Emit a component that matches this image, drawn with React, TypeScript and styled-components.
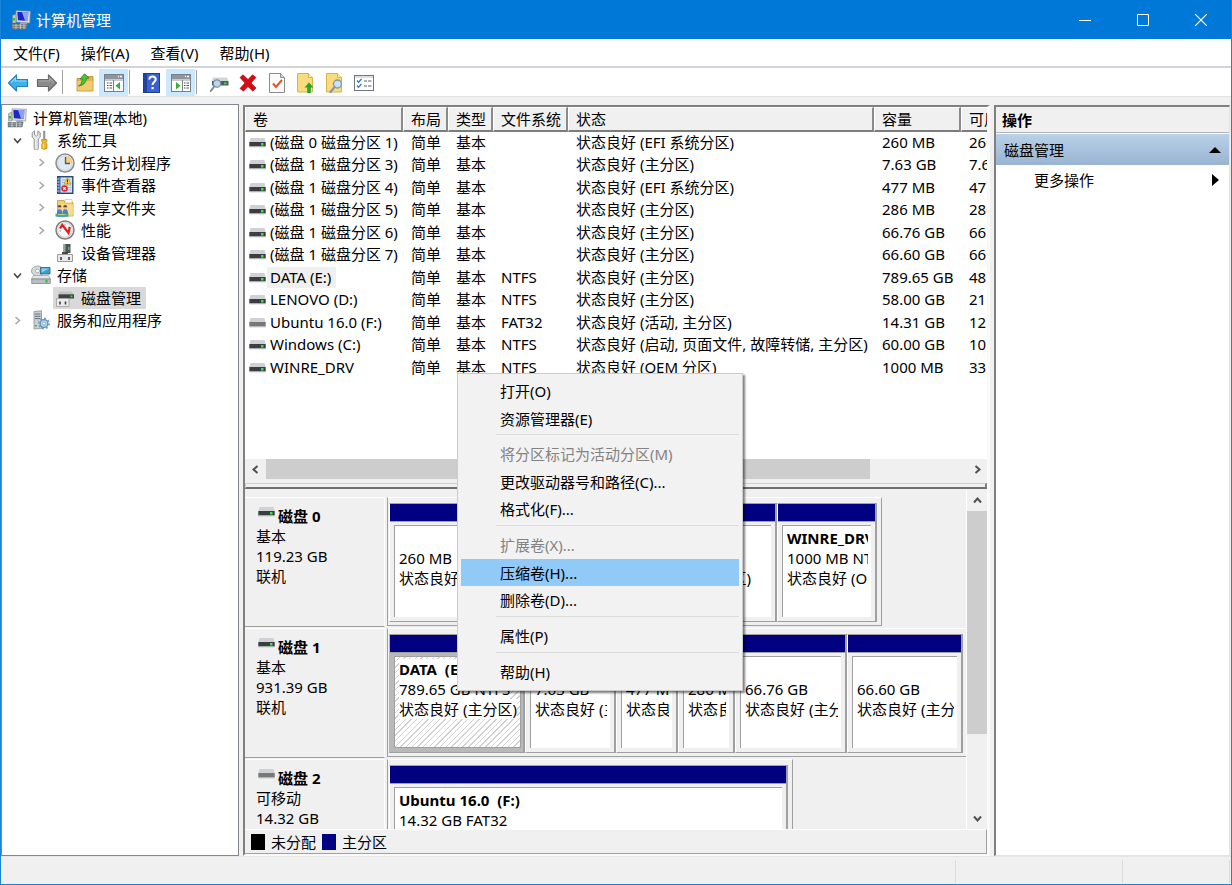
import React from "react";
import styled, { createGlobalStyle, css } from "styled-components";

const GlobalStyle = createGlobalStyle`
  *, *::before, *::after { box-sizing: border-box; }
  body {
    margin: 0;
    font-family: "Noto Sans", "Noto Sans CJK SC", sans-serif;
    font-size: 15px;
    line-height: 20px;
    color: #000;
  }
  button {
    font: inherit;
    color: inherit;
    background: none;
    border: 0;
    padding: 0;
    cursor: default;
  }
  ul { list-style: none; margin: 0; padding: 0; }
  h2, p { margin: 0; font-size: inherit; }
  svg { display: block; flex: none; }
`;

/* ---------- window frame ---------- */

const Window = styled.div`
  position: relative;
  display: flex;
  flex-direction: column;
  height: 100vh;
  min-height: 640px;
  overflow: hidden;
  background: #f0f0f0;
  border: 1px solid #1883d7;
  border-top: 0;
`;

const TitleBar = styled.header`
  display: flex;
  align-items: center;
  flex: none;
  height: 39px;
  padding-left: 10px;
  gap: 5px;
  background: #0078d7;
  color: #fff;
`;

const Title = styled.span`
  flex: 1;
`;

const CaptionButtons = styled.div`
  display: flex;
  padding-right: 1px;
`;

const CaptionButton = styled.button`
  display: grid;
  place-items: center;
  width: 58px;
  height: 39px;
`;

const MenuBar = styled.nav`
  display: flex;
  flex: none;
  align-items: center;
  gap: 21px;
  height: 29px;
  padding: 0 12px;
  background: #fff;
  border-bottom: 2px solid #d0d4d8;
`;

const ToolBar = styled.div`
  display: flex;
  flex: none;
  height: 29px;
  padding: 1px 2px;
  background: #fff;
  border-bottom: 1px solid #e3e3e3;
`;

const ToolButton = styled.button<{ $pressed?: boolean }>`
  display: grid;
  place-items: center;
  width: 29px;
  height: 27px;
  background: ${(p) => (p.$pressed ? "#cce8ff" : "transparent")};
`;

const ToolSeparator = styled.span`
  width: 1px;
  margin: 1px 7px 1px 1px;
  background: #a0a0a0;
`;

const Panes = styled.main`
  display: flex;
  flex: 1;
  min-height: 0;
  padding: 7px 1px 0 0;
`;

const StatusBar = styled.footer`
  display: flex;
  flex: none;
  justify-content: flex-end;
  height: 28px;
  padding: 3px 1px 1px;
  border-top: 1px solid #e6e6e6;
`;

const StatusCell = styled.span<{ $width: number }>`
  width: ${(p) => p.$width}px;
  border-right: 1px solid #dcdcdc;
`;

/* ---------- console tree ---------- */

const TreePane = styled.aside`
  flex: none;
  width: 238px;
  margin-right: 4px;
  padding: 1px 3px;
  background: #fff;
  border: 1px solid #828790;
`;

const TreeRow = styled.li<{ $level: number }>`
  display: flex;
  align-items: center;
  height: 22px;
  padding-left: ${(p) => Math.max(0, p.$level - 1) * 24}px;
  &:nth-child(odd) { height: 23px; }
`;

const Twisty = styled.span`
  display: grid;
  place-items: center;
  width: 24px;
`;

const TreeLabel = styled.button<{ $selected?: boolean }>`
  display: flex;
  align-items: center;
  gap: 6px;
  height: 22px;
  padding: 0 5px 0 2px;
  white-space: nowrap;
  background: ${(p) => (p.$selected ? "#d9d9d9" : "transparent")};
`;

/* ---------- middle pane ---------- */

const CenterPane = styled.section`
  display: flex;
  flex-direction: column;
  flex: 1;
  min-width: 0;
  margin-top: 1px;
  margin-right: 4px;
  border: 2px solid #808080;
  border-right: 3px solid #fafafa;
  border-bottom: 2px solid #fafafa;
`;

const ListView = styled.div`
  flex: 1;
  min-height: 0;
  overflow: hidden;
  background: #fff;
`;

const VolumeTable = styled.table`
  width: 806px;
  table-layout: fixed;
  border-collapse: separate;
  border-spacing: 0;
  text-align: left;
`;

const HeadCell = styled.th<{ $width: number }>`
  width: ${(p) => p.$width}px;
  height: 25px;
  padding: 0 0 0 7px;
  font-weight: 400;
  line-height: 20px;
  background: #f0f0f0;
  border: solid;
  border-width: 1px 2px 2px 1px;
  border-color: #fff #8a8a8a #7c7c7c #fff;
  white-space: nowrap;
  overflow: hidden;
`;

const VolumeRow = styled.tr`
  height: 22px;
  &:nth-child(even) { height: 23px; }
`;

const Cell = styled.td`
  padding: 0 0 0 8px;
  line-height: 21px;
  vertical-align: top;
  white-space: nowrap;
  overflow: hidden;
`;

const NameCell = styled(Cell)`
  padding-left: 4px;
`;

const VolumeName = styled.span`
  display: flex;
  align-items: center;
  gap: 1px;
`;

const NameText = styled.span<{ $selected?: boolean }>`
  padding: 0 5px 0 3px;
  background: ${(p) => (p.$selected ? "#f0f0f0" : "transparent")};
`;

const HScroll = styled.div`
  display: flex;
  flex: none;
  height: 21px;
  background: #f0f0f0;
`;

const ScrollButton = styled.button`
  display: grid;
  place-items: center;
  flex: none;
  width: 20px;
  height: 21px;
`;

const Track = styled.div`
  flex: 1;
`;

const HThumb = styled.div`
  width: 86%;
  height: 20px;
  margin-left: 1px;
  background: #cdcdcd;
`;

const Splitter = styled.div`
  flex: none;
  height: 6px;
  margin: 3px 0 1px;
  border: solid;
  border-width: 1px 2px 2px 1px;
  border-color: #d0d0d0 #808080 #6e6e6e #d0d0d0;
`;

const DiskView = styled.div`
  display: flex;
  flex: none;
  height: 339px;
  overflow: hidden;
`;

const DiskList = styled.div`
  flex: 1;
  min-width: 0;
  padding-top: 7px;
  overflow: hidden;
`;

const DiskRow = styled.article`
  display: flex;
  align-items: flex-start;
  height: 131px;
`;

const DiskLabel = styled.div`
  flex: none;
  width: 140px;
  height: 130px;
  margin-right: 2px;
  padding: 8px 0 0 11px;
  border: solid;
  border-width: 1px 1px 1px 0;
  border-color: #fff #fff #a0a0a0 #fff;
`;

const DiskName = styled.h2`
  display: flex;
  gap: 3px;
  margin-left: 2px;
  font-weight: 700;
`;

const DiskMap = styled.div`
  display: flex;
  flex: none;
  height: 129px;
  padding: 5px 4px 3px 1px;
  border: solid;
  border-width: 1px 1px 1px 1px;
  border-color: #fff #a0a0a0 #a0a0a0 #a0a0a0;
`;

const Partition = styled.div<{ $width: number; $selected?: boolean }>`
  display: flex;
  flex-direction: column;
  width: ${(p) => p.$width}px;
  border: solid #a0a0a0;
  border-width: 1px 2px 1px 1px;
  border-left-color: #fff;
  ${(p) => p.$selected && css`
    background: #b9b9b9;
    border-left-color: #b9b9b9;
  `}
`;

const PartitionBar = styled.div`
  flex: none;
  height: 18px;
  background: #000080;
  border-bottom: 1px solid #a0a0a0;
`;

const PartitionBody = styled.div<{ $selected?: boolean }>`
  flex: 1;
  margin: 3px 4px 4px 4px;
  padding: 2px 3px 0 4px;
  min-width: 0;
  background: ${(p) =>
    p.$selected
      ? "repeating-linear-gradient(135deg, #fff 0 3px, #d2d2d2 3px 4px)"
      : "#fff"};
  border: solid #a0a0a0;
  border-width: 1px 0 0 1px;
  ${(p) => p.$selected && css`
    margin: 3px 2px 4px 4px;
    padding-right: 0;
    border-width: 1px;
  `}
`;

const PartitionLine = styled.p<{ $bold?: boolean }>`
  height: 20px;
  white-space: pre;
  overflow: hidden;
  font-weight: ${(p) => (p.$bold ? 700 : 400)};
`;

const OnWhite = styled.span`
  background: #fff;
`;

const VScroll = styled.div`
  display: flex;
  flex-direction: column;
  flex: none;
  width: 21px;
  border-left: 1px solid #fff;
`;

const VThumb = styled.div`
  height: 75%;
  background: #cdcdcd;
`;

const Legend = styled.div`
  display: flex;
  align-items: center;
  flex: none;
  gap: 6px;
  height: 25px;
  padding-left: 6px;
  border: solid;
  border-width: 1px 1px 1px 0;
  border-color: #fff #a0a0a0 #a0a0a0;
`;

const Swatch = styled.span<{ $color: string }>`
  width: 14px;
  height: 16px;
  background: ${(p) => p.$color};
`;

/* ---------- actions pane ---------- */

const ActionsPane = styled.aside`
  flex: none;
  width: 236px;
  margin-top: 1px;
  background: #fff;
  border: 2px solid #808080;
  border-right: 1px solid #e3e3e3;
  border-bottom: 1px solid #e3e3e3;
`;

const ActionsTitle = styled.h2`
  height: 26px;
  padding: 3px 6px;
  font-weight: 700;
  background: #f0f0f0;
  border-bottom: 1px solid #b4b4b4;
`;

const ActionsGroup = styled.button`
  display: flex;
  align-items: center;
  justify-content: space-between;
  width: 100%;
  height: 31px;
  margin-top: 1px;
  padding: 0 8px;
  background: linear-gradient(#b9d1ea, #99b4d1);
`;

const ActionItem = styled.button`
  display: flex;
  align-items: center;
  justify-content: space-between;
  width: 100%;
  height: 30px;
  padding: 0 10px 0 38px;
`;

/* ---------- context menu ---------- */

const ContextMenu = styled.div`
  position: absolute;
  left: 456px;
  top: 373px;
  width: 286px;
  padding: 3px 3px 4px;
  background: #f2f2f2;
  border: 1px solid #cccccc;
  box-shadow: 2px 2px 2px rgba(0, 0, 0, 0.5);
`;

const MenuGroup = styled.div`
  & + &::before {
    content: "";
    display: block;
    height: 8px;
    margin-left: 35px;
    background: linear-gradient(#dcdcdc, #dcdcdc) 0 2px / 100% 1px no-repeat;
  }
`;

const MenuItem = styled.button<{ $hot?: boolean }>`
  display: block;
  width: 100%;
  height: 28px;
  padding-left: 39px;
  text-align: left;
  background: ${(p) => (p.$hot ? "#91c9f7" : "transparent")};
  &:nth-of-type(even) { height: 27px; }
  &:disabled { color: #838383; }
`;

/* ---------- icons ---------- */

const ComputerIcon = () => (
  <svg width="20" height="20" viewBox="0 0 20 20">
    <path d="M1.500 5.500L5 4v9H1.500z" fill="#c3c9cd" stroke="#7b8084" strokeWidth="0.6" />
    <rect x="2" y="8" width="2" height="2.500" fill="#2ec02e" />
    <path d="M5 .8l14.300.4-.6 11.800L5.500 12z" fill="#e2e2dc" stroke="#90948f" strokeWidth="0.7" />
    <path d="M6.300 2l11 .3-.4 8.700-10-.7z" fill="#1a25cc" />
    <path d="M11 2.100l6.300.2-.4 8.700-2.900-.2z" fill="#8ea2f2" />
    <path d="M9.500 12.500h6l.8 2H8.500z" fill="#a7abae" />
    <path d="M.8 14h15.700l-1.200 5.300H.8z" fill="#6d767c" />
    <path d="M1.500 15.300h14M1.500 17.300h13.500" stroke="#aeb5b9" strokeWidth="0.8" />
    <path d="M5 14.200v5M9.500 14.200v5M13 14.200v5" stroke="#d3d7da" strokeWidth="0.8" />
  </svg>
);

const ToolsIcon = () => (
  <svg width="20" height="20" viewBox="0 0 20 20">
    <path d="M3 .8v4l1.700 1.500 1.700-1.500v-4l2.300 2v4.400L6.800 9v9.300a2 2 0 0 1-4.100 0V9L.7 7.200V2.800z" transform="translate(.5 0)" fill="#e8e8e8" stroke="#8a8a8a" strokeWidth="0.9" />
    <path d="M12.500 1h1.500v9h-1.500z" fill="#9a9a9a" stroke="#6f6f6f" strokeWidth="0.4" />
    <path d="M10.700 9.500h5.200v2.300l-1 1 1 1.400v4.300q-2.600 1.700-5.200 0v-4.300l1-1.400-1-1z" fill="#f2b824" stroke="#b97c05" strokeWidth="0.7" />
    <path d="M12.300 14v4.500" stroke="#fbe08a" />
  </svg>
);

const ClockIcon = () => (
  <svg width="20" height="20" viewBox="0 0 20 20">
    <circle cx="10" cy="10" r="9" fill="#f1f3f5" stroke="#8c8f92" strokeWidth="1.600" />
    <circle cx="10" cy="10" r="7.300" fill="#dfe9f3" stroke="#c4c8cb" strokeWidth="0.6" />
    <path d="M10.500 10.500V3a7.500 7.500 0 0 1 7 7.500z" fill="#f4cf7c" />
    <path d="M10.500 4v6.500H15" fill="none" stroke="#4e5a66" strokeWidth="1.300" />
  </svg>
);

const EventIcon = () => (
  <svg width="20" height="20" viewBox="0 0 20 20">
    <rect x="2.500" y="1.500" width="15.500" height="17" fill="#3e64a8" stroke="#2b4679" />
    <rect x="5.500" y="2.500" width="11.500" height="15" fill="#d5e2f3" />
    <path d="M7 5h9M7 7.500h9M7 10h9M7 12.500h9M7 15h9" stroke="#9db5d4" strokeWidth="0.8" />
    <path d="M1.500 4h3M1.500 7h3M1.500 10h3M1.500 13h3M1.500 16h3" stroke="#c7ccd2" strokeWidth="1.200" />
    <path d="M12.500 2.500l3.500 6.500H9z" fill="#fbd52f" stroke="#b38d0a" strokeWidth="0.6" />
    <path d="M12.500 4.500v2.500M12.500 7.700v.8" stroke="#222" />
    <circle cx="9.500" cy="13.500" r="3.300" fill="#d92b35" />
    <path d="M8.300 12.300l2.400 2.400M10.700 12.300l-2.400 2.400" stroke="#fff" strokeWidth="1.100" />
  </svg>
);

const SharedFolderIcon = () => (
  <svg width="20" height="20" viewBox="0 0 20 20">
    <path d="M2.500 2.500h6.500l1 2h8v13.500H2.500z" fill="#f1cf72" stroke="#c79b32" strokeWidth="0.8" />
    <rect x="10" y="1.800" width="7" height="3.200" fill="#fff" stroke="#c79b32" strokeWidth="0.5" />
    <path d="M3 6.500h14.800v11H3z" fill="#f7dd92" />
    <path d="M1.800 16q0-5 2.700-5t3 5z" fill="#4b83c7" />
    <circle cx="4.500" cy="9.500" r="2" fill="#f0c39b" />
    <path d="M2.500 9.300q0-2.300 2-2.300t2 2.300z" fill="#6e4a24" />
    <path d="M7.500 16q0-5 2.700-5t3 5z" fill="#4b83c7" />
    <circle cx="10.200" cy="9.500" r="2" fill="#f0c39b" />
    <path d="M8.200 9.300q0-2.300 2-2.300t2 2.300z" fill="#6e4a24" />
    <path d="M.5 15.500q6 2.500 13 0v3q-7 1.500-13 0z" fill="#4fa98e" />
  </svg>
);

const PerformanceIcon = () => (
  <svg width="20" height="20" viewBox="0 0 20 20">
    <circle cx="10" cy="10" r="9" fill="#fff" stroke="#7d7d7d" strokeWidth="1.500" />
    <circle cx="10" cy="10" r="7.300" fill="#f7f7f7" stroke="#b6b6b6" strokeWidth="0.7" />
    <path d="M5 6l1.500 1M10 4v1.500M15 7l-1.500.7M4.500 11H6M15.500 11H14" stroke="#777" strokeWidth="0.8" />
    <path d="M5 8.500L7.300 5l6.200 8 1.300-6" fill="none" stroke="#e01c1c" strokeWidth="2.200" />
  </svg>
);

const DeviceIcon = () => (
  <svg width="20" height="20" viewBox="0 0 20 20">
    <path d="M8.500 1h7v9h-7z" fill="#4f5458" />
    <path d="M8.500 1h2v9h-2z" fill="#9ba1a5" />
    <rect x="13" y="4" width="1.500" height="3" fill="#2fd03a" />
    <path d="M7 9h6v3H7z" fill="#46494c" />
    <path d="M2.500 11.500h15v7h-15z" fill="#e9e9e9" stroke="#9c9c9c" />
    <path d="M6 14v3M14 14v3" stroke="#333" strokeWidth="1.500" />
  </svg>
);

const StorageIcon = () => (
  <svg width="20" height="20" viewBox="0 0 20 20">
    <ellipse cx="6.500" cy="6" rx="6" ry="5" fill="#d3dad9" stroke="#8e9796" strokeWidth="0.8" />
    <ellipse cx="6.500" cy="6" rx="2" ry="1.700" fill="#fff" stroke="#8e9796" strokeWidth="0.7" />
    <path d="M9.500 2.500h9.500v6.500H9.500z" fill="#3b9fd0" stroke="#27607f" strokeWidth="0.8" />
    <path d="M10.500 3.500h7.500l-7.500 4z" fill="#8fd3f0" />
    <path d="M2.500 10.500h15l2 3.500H.5z" fill="#e3e5e6" stroke="#9aa0a3" strokeWidth="0.7" />
    <path d="M.7 14h18.600v4.500H.7z" fill="#b9bfc2" stroke="#777d80" strokeWidth="0.7" />
    <rect x="14.500" y="14.800" width="2" height="2.800" fill="#29c22d" />
  </svg>
);

const DiskManagementIcon = () => (
  <svg width="20" height="20" viewBox="0 0 20 20">
    <path d="M4.500 3.500h12l2.500 3H3.500z" fill="#bfc3c6" />
    <path d="M3.500 6.300h15.500v4.200H3.500z" fill="#3f4346" />
    <rect x="15.500" y="7.500" width="2" height="1.800" fill="#2fe03a" />
    <path d="M1.500 10.500h12.500v8H1.500z" fill="#ececec" stroke="#9d9d9d" strokeWidth="0.8" />
    <path d="M5 13.500v3M10.500 13.500v3" stroke="#333" strokeWidth="1.500" />
  </svg>
);

const ServicesIcon = () => (
  <svg width="20" height="20" viewBox="0 0 20 20">
    <path d="M3 1.500l7.500-.7v17.700L3 19z" fill="#c9d0d5" stroke="#899197" strokeWidth="0.8" />
    <path d="M4 4h5.500M4 6.300h5.500M4 8.600h5.500" stroke="#66717a" />
    <rect x="4" y="15" width="2" height="1.500" fill="#33b84a" />
    <circle cx="13" cy="13.500" r="3.900" fill="#b9d4ea" stroke="#5d8fb9" strokeWidth="1.300" />
    <circle cx="13" cy="13.500" r="5.200" fill="none" stroke="#6f9cc2" strokeWidth="1.500" strokeDasharray="2 2" />
    <circle cx="13" cy="13.500" r="1.500" fill="#fff" stroke="#5d8fb9" strokeWidth="0.6" />
  </svg>
);

const DriveIcon = ({ removable = false }: { removable?: boolean }) => (
  <svg width="17" height="11" viewBox="0 0 17 11">
    <path d="M1.500 1h14l1.200 4.500H.3z" fill="#cfd1d6" />
    <path d="M.3 5h16.400v4.500H.3z" fill={removable ? "#77787a" : "#3b3e40"} />
    <path d="M.3 9.300h16.400v1H.3z" fill="#b5b7b9" />
    {!removable && <rect x="12" y="6" width="2.500" height="2.500" fill="#3fe04b" />}
  </svg>
);

const Arrow = ({ back = false }: { back?: boolean }) => (
  <svg width="22" height="20" viewBox="0 0 22 20">
    <path
      d={back ? "M1.500 10l8-8v4.500h11v7h-11V18z" : "M20.500 10l-8-8v4.500h-11v7h11V18z"}
      fill={back ? "#3eb1ec" : "#8b8b8b"}
      stroke={back ? "#2a7fbe" : "#686868"}
      strokeWidth="1.200"
      strokeLinejoin="round"
    />
    <path d={back ? "M4 9.500l4.500-4.500v3h11" : "M2.500 8h11V5l4.500 4.500"} fill="none" stroke={back ? "#8fd8fa" : "#a8a8a8"} strokeWidth="1.200" />
  </svg>
);

const UpFolderIcon = () => (
  <svg width="20" height="20" viewBox="0 0 20 20">
    <path d="M2 5.500h6l1.500-2H18V18H2z" fill="#e3b44e" stroke="#ba8a2c" strokeWidth="0.8" />
    <path d="M2.500 8h15v9.500h-15z" fill="#f0cb74" />
    <path d="M3.500 13q3-.5 4-7H5L9.500.8 14 5l-2.500.4Q11 12 3.500 13z" fill="#4fc23a" stroke="#288318" strokeWidth="0.8" />
  </svg>
);

const PaneIcon = ({ side }: { side: "left" | "right" }) => (
  <svg width="20" height="18" viewBox="0 0 20 18">
    <rect x="0.500" y="0.500" width="19" height="17" fill="#fff" stroke="#7a8087" />
    <rect x="1" y="1" width="18" height="4" fill="#8e959c" />
    <path d="M14 2.500h1M16 2.500h2" stroke="#fff" strokeWidth="1.300" />
    <path d="M1 6h18" stroke="#8e959c" />
    {side === "left" ? (
      <>
        <path d="M9.500 6v11" stroke="#7a8087" />
        <path d="M3 9h5M3 11.500h5M3 14h5" stroke="#4b535a" strokeWidth="1.100" strokeDasharray="1.500 1 4" />
        <path d="M16 8v7.500L11.500 11.800z" fill="#3bab32" />
      </>
    ) : (
      <>
        <path d="M11.500 6v11" stroke="#7a8087" />
        <path d="M13 9h5M13 11.500h5M13 14h5" stroke="#4b535a" strokeWidth="1.100" strokeDasharray="1.500 1 4" />
        <path d="M5 8v7.500l4.500-3.700z" fill="#3bab32" />
      </>
    )}
  </svg>
);

const HelpIcon = () => (
  <svg width="17" height="20" viewBox="0 0 17 20">
    <rect x="0.500" y="0.500" width="16" height="19" fill="#3a62cf" stroke="#1f3c92" />
    <rect x="1" y="1" width="3" height="18" fill="#23439f" />
    <path d="M6.300 6.500q.2-3 3.200-3t3.200 2.800q0 1.700-1.600 2.800T9.500 12" fill="none" stroke="#fff" strokeWidth="2" />
    <rect x="8.500" y="14" width="2.200" height="2.200" fill="#fff" />
  </svg>
);

const ConnectIcon = () => (
  <svg width="20" height="20" viewBox="0 0 20 20">
    <path d="M4 4.500h14l1.500 3.500H3z" fill="#d2d5d8" />
    <path d="M3 8h16.500v4.500H3z" fill="#54595d" />
    <rect x="15" y="9.300" width="2.500" height="2" fill="#2fdc3a" />
    <circle cx="8" cy="10.500" r="3.700" fill="#b7d8ef" stroke="#7d8c98" strokeWidth="1.200" />
    <path d="M5.200 13.500L1.800 18" stroke="#7f8a93" strokeWidth="2" strokeLinecap="round" />
  </svg>
);

const DeleteIcon = () => (
  <svg width="18" height="18" viewBox="0 0 18 18">
    <path d="M1 3.500L4 .8l5 4.700 4.500-4.700L17 3.500 12 9l5 5-3.200 3.200L9 12.500 4.500 17.200 1 14.500 6 9z" fill="#d80a14" stroke="#9f0008" strokeWidth="0.6" />
  </svg>
);

const CheckPageIcon = () => (
  <svg width="16" height="20" viewBox="0 0 16 20">
    <path d="M.5.500h11l4 4v15H.5z" fill="#fafafa" stroke="#8b8b8b" />
    <path d="M11.500.500v4h4" fill="#dcdcdc" stroke="#8b8b8b" />
    <path d="M4 10.500l3 3.500 6-7" fill="none" stroke="#e2552b" strokeWidth="2" />
  </svg>
);

const NoteIcon = ({ kind }: { kind: "up" | "find" }) => (
  <svg width="18" height="20" viewBox="0 0 18 20">
    <path d="M.5.500h11l4 4v14.500H.5z" fill="#f9dc7d" stroke="#d8b24b" />
    <path d="M11.500.500v4h4" fill="#fff1bd" stroke="#d8b24b" />
    {kind === "up" ? (
      <path d="M12 9.500l4.500 5h-2.700V20h-3.600v-5.500H7.500z" fill="#28a428" />
    ) : (
      <>
        <circle cx="11.500" cy="11" r="4" fill="#c5e4f8" stroke="#8594a1" strokeWidth="1.300" />
        <path d="M8.600 14L4.500 19" stroke="#8594a1" strokeWidth="2" strokeLinecap="round" />
      </>
    )}
  </svg>
);

const PropertiesIcon = () => (
  <svg width="20" height="16" viewBox="0 0 20 16">
    <rect x="0.500" y="0.500" width="19" height="15" fill="#fff" stroke="#70767c" />
    <path d="M1 2h18" stroke="#b9bec3" />
    <path d="M3 5.500l1.500 1.700L7.500 4M3 10.500l1.500 1.700L7.500 9" fill="none" stroke="#2f78c8" strokeWidth="1.300" />
    <path d="M10 6h3M14 6h3.500M10 11h3M14 11h3.500" stroke="#5b6167" strokeWidth="1.200" />
  </svg>
);

const chevrons = {
  left: "M7.500 2l-4 3.500 4 3.500",
  right: "M3.500 2l4 3.500-4 3.500",
  up: "M2 7.500l3.500-4 3.500 4",
  down: "M2 3.500l3.500 4 3.500-4",
};

const Chevron = ({ to, color = "#505050", weight = 2 }: { to: keyof typeof chevrons; color?: string; weight?: number }) => (
  <svg width="11" height="11" viewBox="0 0 11 11">
    <path d={chevrons[to]} fill="none" stroke={color} strokeWidth={weight} />
  </svg>
);

/* ---------- data ---------- */

type TreeNode = { level: number; label: string; icon: React.ReactNode; state?: "open" | "closed"; selected?: boolean };

const tree: TreeNode[] = [
  { level: 0, label: "计算机管理(本地)", icon: <ComputerIcon /> },
  { level: 1, label: "系统工具", icon: <ToolsIcon />, state: "open" },
  { level: 2, label: "任务计划程序", icon: <ClockIcon />, state: "closed" },
  { level: 2, label: "事件查看器", icon: <EventIcon />, state: "closed" },
  { level: 2, label: "共享文件夹", icon: <SharedFolderIcon />, state: "closed" },
  { level: 2, label: "性能", icon: <PerformanceIcon />, state: "closed" },
  { level: 2, label: "设备管理器", icon: <DeviceIcon /> },
  { level: 1, label: "存储", icon: <StorageIcon />, state: "open" },
  { level: 2, label: "磁盘管理", icon: <DiskManagementIcon />, selected: true },
  { level: 1, label: "服务和应用程序", icon: <ServicesIcon />, state: "closed" },
];

const columns = [
  { title: "卷", width: 158 },
  { title: "布局", width: 45 },
  { title: "类型", width: 45 },
  { title: "文件系统", width: 75 },
  { title: "状态", width: 306 },
  { title: "容量", width: 87 },
  { title: "可用", width: 90 },
];

const volumes = [
  ["(磁盘 0 磁盘分区 1)", "", "状态良好 (EFI 系统分区)", "260 MB", "260 MB"],
  ["(磁盘 1 磁盘分区 3)", "", "状态良好 (主分区)", "7.63 GB", "7.63 GB"],
  ["(磁盘 1 磁盘分区 4)", "", "状态良好 (EFI 系统分区)", "477 MB", "477 MB"],
  ["(磁盘 1 磁盘分区 5)", "", "状态良好 (主分区)", "286 MB", "286 MB"],
  ["(磁盘 1 磁盘分区 6)", "", "状态良好 (主分区)", "66.76 GB", "66.76 GB"],
  ["(磁盘 1 磁盘分区 7)", "", "状态良好 (主分区)", "66.60 GB", "66.60 GB"],
  ["DATA (E:)", "NTFS", "状态良好 (主分区)", "789.65 GB", "48"],
  ["LENOVO (D:)", "NTFS", "状态良好 (主分区)", "58.00 GB", "21"],
  ["Ubuntu 16.0 (F:)", "FAT32", "状态良好 (活动, 主分区)", "14.31 GB", "12"],
  ["Windows (C:)", "NTFS", "状态良好 (启动, 页面文件, 故障转储, 主分区)", "60.00 GB", "10"],
  ["WINRE_DRV", "NTFS", "状态良好 (OEM 分区)", "1000 MB", "33"],
];

type Part = { width: number; name?: string; size: string; status: string; selected?: boolean };
type Disk = { name: string; kind: string; size: string; removable?: boolean; parts: Part[] };

const disks: Disk[] = [
  {
    name: "磁盘 0",
    kind: "基本",
    size: "119.23 GB",
    parts: [
      { width: 86, size: "260 MB", status: "状态良好 (EFI 系统分区)" },
      { width: 148, name: "Windows  (C:)", size: "60.00 GB NTFS", status: "状态良好 (启动, 页面文件, 故障转储, 主分区)" },
      { width: 154, name: "LENOVO  (D:)", size: "58.00 GB NTFS", status: "状态良好 (主分区)" },
      { width: 100, name: "WINRE_DRV", size: "1000 MB NTFS", status: "状态良好 (OEM 分区)" },
    ],
  },
  {
    name: "磁盘 1",
    kind: "基本",
    size: "931.39 GB",
    parts: [
      { width: 136, name: "DATA  (E:)", size: "789.65 GB NTFS", status: "状态良好 (主分区)", selected: true },
      { width: 91, size: "7.63 GB", status: "状态良好 (主分区)" },
      { width: 62, size: "477 MB", status: "状态良好 (EFI 系统分区)" },
      { width: 57, size: "286 MB", status: "状态良好 (主分区)" },
      { width: 112, size: "66.76 GB", status: "状态良好 (主分区)" },
      { width: 116, size: "66.60 GB", status: "状态良好 (主分区)" },
    ],
  },
  {
    name: "磁盘 2",
    kind: "可移动",
    size: "14.32 GB",
    removable: true,
    parts: [{ width: 399, name: "Ubuntu 16.0  (F:)", size: "14.32 GB FAT32", status: "状态良好 (活动, 主分区)" }],
  },
];

type Command = { label: string; disabled?: boolean; hot?: boolean };

const commands: Command[][] = [
  [{ label: "打开(O)" }, { label: "资源管理器(E)" }],
  [{ label: "将分区标记为活动分区(M)", disabled: true }, { label: "更改驱动器号和路径(C)..." }, { label: "格式化(F)..." }],
  [{ label: "扩展卷(X)...", disabled: true }, { label: "压缩卷(H)...", hot: true }, { label: "删除卷(D)..." }],
  [{ label: "属性(P)" }],
  [{ label: "帮助(H)" }],
];

const PartitionBox = ({ part }: { part: Part }) => (
  <Partition $width={part.width} $selected={part.selected}>
    <PartitionBar />
    <PartitionBody $selected={part.selected}>
      <PartitionLine $bold><OnWhite>{part.name}</OnWhite></PartitionLine>
      <PartitionLine><OnWhite>{part.size}</OnWhite></PartitionLine>
      <PartitionLine><OnWhite>{part.status}</OnWhite></PartitionLine>
    </PartitionBody>
  </Partition>
);

export default function App() {
  return (
    <Window>
      <GlobalStyle />
      <TitleBar>
        <ComputerIcon />
        <Title>计算机管理</Title>
        <CaptionButtons>
          <CaptionButton aria-label="最小化">
            <svg width="12" height="12" viewBox="0 0 12 12"><path d="M0 6.500h12" stroke="#fff" /></svg>
          </CaptionButton>
          <CaptionButton aria-label="最大化">
            <svg width="12" height="12" viewBox="0 0 12 12"><path d="M.5.500h11v11H.5z" fill="none" stroke="#fff" /></svg>
          </CaptionButton>
          <CaptionButton aria-label="关闭">
            <svg width="12" height="12" viewBox="0 0 12 12"><path d="M0 0l12 12M12 0L0 12" stroke="#fff" strokeWidth="1.200" /></svg>
          </CaptionButton>
        </CaptionButtons>
      </TitleBar>

      <MenuBar>
        {["文件(F)", "操作(A)", "查看(V)", "帮助(H)"].map((m) => (
          <button key={m}>{m}</button>
        ))}
      </MenuBar>

      <ToolBar>
        <ToolButton aria-label="后退"><Arrow back /></ToolButton>
        <ToolButton aria-label="前进"><Arrow /></ToolButton>
        <ToolSeparator />
        <ToolButton aria-label="上一级"><UpFolderIcon /></ToolButton>
        <ToolButton aria-label="显示控制台树" $pressed><PaneIcon side="left" /></ToolButton>
        <ToolSeparator />
        <ToolButton aria-label="帮助"><HelpIcon /></ToolButton>
        <ToolButton aria-label="显示操作窗格" $pressed><PaneIcon side="right" /></ToolButton>
        <ToolSeparator />
        <ToolButton aria-label="连接"><ConnectIcon /></ToolButton>
        <ToolButton aria-label="删除"><DeleteIcon /></ToolButton>
        <ToolButton aria-label="检查"><CheckPageIcon /></ToolButton>
        <ToolButton aria-label="打开"><NoteIcon kind="up" /></ToolButton>
        <ToolButton aria-label="查找"><NoteIcon kind="find" /></ToolButton>
        <ToolButton aria-label="属性"><PropertiesIcon /></ToolButton>
      </ToolBar>

      <Panes>
        <TreePane>
          <ul>
            {tree.map((n) => (
              <TreeRow key={n.label} $level={n.level}>
                {n.level > 0 && (
                  <Twisty>
                    {n.state === "open" && <Chevron to="down" color="#404040" weight={1.5} />}
                    {n.state === "closed" && <Chevron to="right" color="#a6a6a6" weight={1.5} />}
                  </Twisty>
                )}
                <TreeLabel $selected={n.selected}>
                  {n.icon}
                  {n.label}
                </TreeLabel>
              </TreeRow>
            ))}
          </ul>
        </TreePane>

        <CenterPane>
          <ListView>
            <VolumeTable>
              <thead>
                <tr>
                  {columns.map((c) => (
                    <HeadCell key={c.title} $width={c.width} scope="col">{c.title}</HeadCell>
                  ))}
                </tr>
              </thead>
              <tbody>
                {volumes.map(([name, fs, status, size, free]) => (
                  <VolumeRow key={name}>
                    <NameCell>
                      <VolumeName>
                        <DriveIcon removable={name.startsWith("Ubuntu")} />
                        <NameText $selected={name === "DATA (E:)"}>{name}</NameText>
                      </VolumeName>
                    </NameCell>
                    <Cell>简单</Cell>
                    <Cell>基本</Cell>
                    <Cell>{fs}</Cell>
                    <Cell>{status}</Cell>
                    <Cell>{size}</Cell>
                    <Cell>{free}</Cell>
                  </VolumeRow>
                ))}
              </tbody>
            </VolumeTable>
          </ListView>
          <HScroll>
            <ScrollButton aria-label="向左滚动"><Chevron to="left" /></ScrollButton>
            <Track><HThumb /></Track>
            <ScrollButton aria-label="向右滚动"><Chevron to="right" /></ScrollButton>
          </HScroll>
          <Splitter />
          <DiskView>
            <DiskList>
              {disks.map((d) => (
                <DiskRow key={d.name}>
                  <DiskLabel>
                    <DiskName><DriveIcon removable={d.removable} />{d.name}</DiskName>
                    <p>{d.kind}</p>
                    <p>{d.size}</p>
                    <p>联机</p>
                  </DiskLabel>
                  <DiskMap>
                    {d.parts.map((p) => <PartitionBox key={p.size} part={p} />)}
                  </DiskMap>
                </DiskRow>
              ))}
            </DiskList>
            <VScroll>
              <ScrollButton aria-label="向上滚动"><Chevron to="up" /></ScrollButton>
              <Track><VThumb /></Track>
              <ScrollButton aria-label="向下滚动"><Chevron to="down" /></ScrollButton>
            </VScroll>
          </DiskView>
          <Legend>
            <Swatch $color="#000" />未分配
            <Swatch $color="#000080" />主分区
          </Legend>
        </CenterPane>

        <ActionsPane>
          <ActionsTitle>操作</ActionsTitle>
          <ActionsGroup>
            磁盘管理
            <svg width="12" height="6" viewBox="0 0 12 6"><path d="M6 0l6 6H0z" /></svg>
          </ActionsGroup>
          <ActionItem>
            更多操作
            <svg width="7" height="12" viewBox="0 0 7 12"><path d="M0 0l7 6-7 6z" /></svg>
          </ActionItem>
        </ActionsPane>
      </Panes>

      <StatusBar>
        <StatusCell $width={166} />
        <StatusCell $width={167} />
        <StatusCell $width={107} />
      </StatusBar>

      <ContextMenu role="menu">
        {commands.map((group) => (
          <MenuGroup key={group[0].label}>
            {group.map((c) => (
              <MenuItem key={c.label} role="menuitem" disabled={c.disabled} $hot={c.hot}>{c.label}</MenuItem>
            ))}
          </MenuGroup>
        ))}
      </ContextMenu>
    </Window>
  );
}
